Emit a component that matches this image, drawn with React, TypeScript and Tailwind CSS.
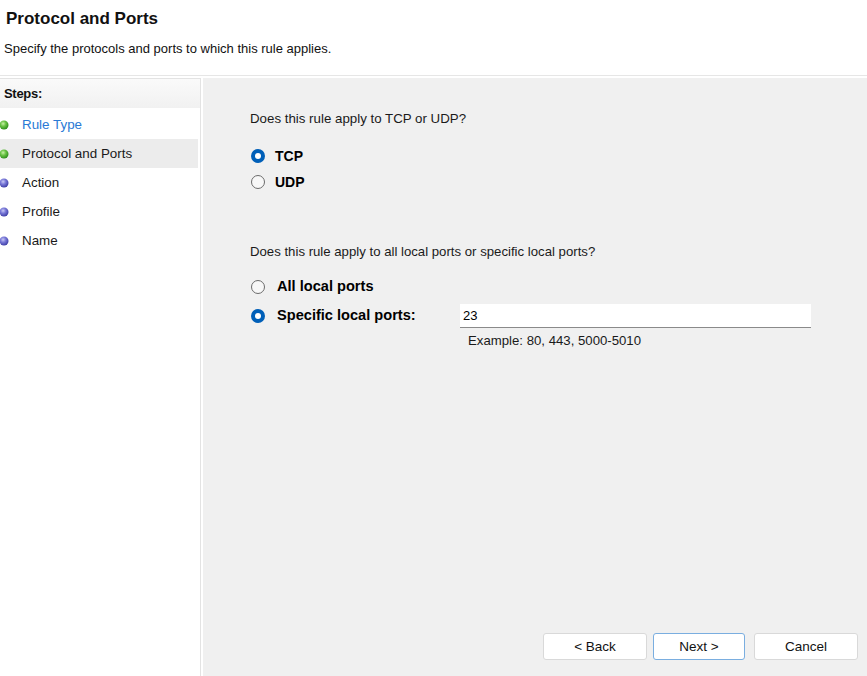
import React from "react";

function Bullet({ done }: { done: boolean }) {
  const id = done ? "gGreen" : "gBlue";
  return (
    <svg width="10" height="10" viewBox="0 0 10 10" className="shrink-0">
      <defs>
        <radialGradient id={id} cx="40%" cy="35%" r="65%">
          {done ? (
            <>
              <stop offset="0%" stopColor="#c8f0a8" />
              <stop offset="45%" stopColor="#6cc447" />
              <stop offset="100%" stopColor="#2f8f1c" />
            </>
          ) : (
            <>
              <stop offset="0%" stopColor="#c8c8f4" />
              <stop offset="45%" stopColor="#7a7ad8" />
              <stop offset="100%" stopColor="#4040a8" />
            </>
          )}
        </radialGradient>
      </defs>
      <circle cx="5" cy="5" r="4.5" fill={`url(#${id})`} />
    </svg>
  );
}

function Radio({ checked }: { checked: boolean }) {
  return checked ? (
    <span className="w-[14px] h-[14px] rounded-full bg-[#005fb8] flex items-center justify-center shrink-0">
      <span className="w-[6px] h-[6px] rounded-full bg-white" />
    </span>
  ) : (
    <span className="w-[14px] h-[14px] rounded-full border border-[#6b6b6b] bg-[#f7f7f7] shrink-0" />
  );
}

const steps = [
  { label: "Rule Type", done: true, link: true, active: false },
  { label: "Protocol and Ports", done: true, link: false, active: true },
  { label: "Action", done: false, link: false, active: false },
  { label: "Profile", done: false, link: false, active: false },
  { label: "Name", done: false, link: false, active: false },
];

export default function App() {
  return (
    <div
      className="w-[867px] h-[676px] bg-white flex flex-col overflow-hidden text-black"
      style={{ fontFamily: '"Liberation Sans", Arial, sans-serif' }}
    >
      <div className="h-[76px] shrink-0 border-b border-[#e6e6e6] pl-[6px] pt-[9px]">
        <div className="text-[17px] font-bold leading-[20px] text-[#111]">Protocol and Ports</div>
        <div className="text-[13px] leading-[16px] mt-[12px] -ml-[2px] text-[#111]">
          Specify the protocols and ports to which this rule applies.
        </div>
      </div>
      <div className="flex-1 flex pt-[2px] min-h-0">
        <div className="w-[201px] shrink-0 border-t border-r border-[#e3e3e3] bg-white flex flex-col">
          <div className="h-[29px] flex items-center pl-[4px] bg-gradient-to-b from-[#fafafa] to-[#f1f1f1] text-[13px] font-bold tracking-[-0.3px] text-[#111]">
            Steps:
          </div>
          <div className="pt-[2px] flex flex-col">
            {steps.map((s) => (
              <div
                key={s.label}
                className={`h-[29px] mr-[2px] flex items-center ${s.active ? "bg-[#ececec]" : ""}`}
              >
                <span className="w-[22px] -ml-[1px] flex items-center">
                  <Bullet done={s.done} />
                </span>
                <span
                  className={`ml-[1px] text-[13.4px] leading-[16px] ${s.link ? "text-[#2a7ad5]" : "text-[#1a1a1a]"}`}
                >
                  {s.label}
                </span>
              </div>
            ))}
          </div>
        </div>
        <div className="flex-1 ml-[2px] bg-[#f0f0f0] flex flex-col pl-[47px] pr-[9px] pb-[16px]">
          <div className="mt-[33px] text-[13.3px] leading-[16px] text-[#1a1a1a]">
            Does this rule apply to TCP or UDP?
          </div>
          <div className="mt-[19px] h-[20px] flex items-center pl-[1px]">
            <Radio checked={true} />
            <span className="ml-[10px] text-[14px] font-bold">TCP</span>
          </div>
          <div className="mt-[6px] h-[20px] flex items-center pl-[1px]">
            <Radio checked={false} />
            <span className="ml-[10px] text-[14px] font-bold">UDP</span>
          </div>
          <div className="mt-[52px] text-[13.2px] leading-[16px] text-[#1a1a1a]">
            Does this rule apply to all local ports or specific local ports?
          </div>
          <div className="mt-[17px] h-[20px] flex items-center pl-[1px]">
            <Radio checked={false} />
            <span className="ml-[12px] text-[14.6px] font-bold">All local ports</span>
          </div>
          <div className="mt-[7px] h-[24px] flex items-center pl-[1px]">
            <Radio checked={true} />
            <span className="ml-[12px] w-[183px] text-[14.6px] font-bold">Specific local ports:</span>
            <div className="w-[351px] h-[24px] bg-white border-b border-[#8a8a8a] flex items-center pl-[3px] text-[13px]">
              23
            </div>
          </div>
          <div className="mt-[5px] text-[13.2px] leading-[16px] pl-[218px] text-[#1a1a1a]">
            Example: 80, 443, 5000-5010
          </div>
          <div className="mt-auto flex justify-end">
            <button className="w-[104px] h-[27px] pt-[2px] bg-white border border-[#d9d9d9] rounded-[3px] text-[13.5px] text-[#111]">
              &lt; Back
            </button>
            <button className="ml-[6px] w-[92px] h-[27px] pt-[2px] bg-white border border-[#7aaee0] rounded-[3px] text-[13.5px] text-[#111]">
              Next &gt;
            </button>
            <button className="ml-[9px] w-[104px] h-[27px] pt-[2px] bg-white border border-[#d9d9d9] rounded-[3px] text-[13.5px] text-[#111]">
              Cancel
            </button>
          </div>
        </div>
      </div>
    </div>
  );
}
